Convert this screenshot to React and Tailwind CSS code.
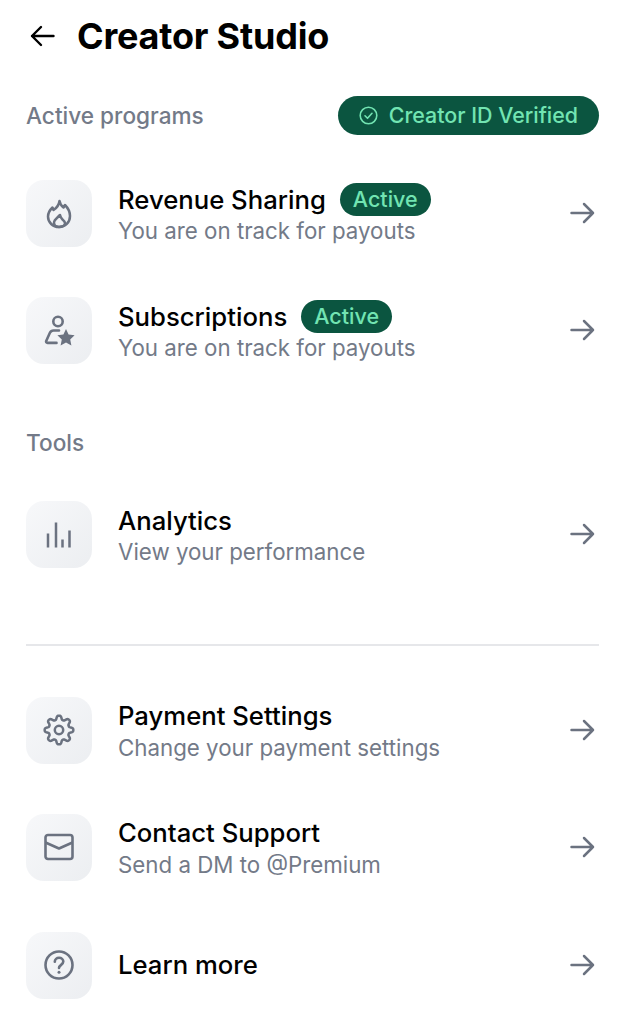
const font = { fontFamily: "Inter, 'Noto Sans', sans-serif" };

// 8-lobed cog outline, traced in polar coordinates
const cogPath = Array.from({ length: 120 }, (_, i) => {
  const a = (i / 120) * Math.PI * 2;
  const r = 12.4 + 2.1 * Math.tanh(1.6 * Math.cos(8 * a));
  const x = 16 + r * Math.sin(a);
  const y = 16 - r * Math.cos(a);
  return `${i === 0 ? 'M' : 'L'}${x.toFixed(2)} ${y.toFixed(2)}`;
}).join(' ') + 'Z';

function BackArrow() {
  return (
    <svg width="25" height="22" viewBox="0 0 25 22" fill="none" stroke="#000" strokeWidth="2.400" strokeLinecap="round" strokeLinejoin="round">
      <path d="M23.500 11H2M11 2l-9 9 9 9" />
    </svg>
  );
}

function RowArrow() {
  return (
    <svg width="25" height="22" viewBox="0 0 25 22" fill="none" stroke="#6b7280" strokeWidth="2.500" strokeLinecap="round" strokeLinejoin="round" className="mb-[1px] mr-[4px] shrink-0">
      <path d="M1.500 11H23M14 2l9 9-9 9" />
    </svg>
  );
}

function Flame() {
  return (
    <svg width="26" height="30" viewBox="0 0 26 30" fill="none" stroke="#6b7280" strokeWidth="2.500" strokeLinejoin="round" strokeLinecap="round">
      <path d="M13.500 2c.5 3 2 5 4 6.500L19 6c3 3 5 7 5 11 0 6.500-4.800 11-11 11S2 23.500 2 17.500c0-3.500 1.800-6.500 4.500-9l1 2.500c3-2 5.500-5 6-9z" />
      <path d="M13 28c-3 0-5-2-5-4.500 0-2.500 3-4.500 6-7.500.5 2 1.500 3.500 2.500 4.500 1.500 1.200 2.500 2.500 2.500 3.800 0 2-2.500 3.700-6 3.700" />
    </svg>
  );
}

function UserStar() {
  return (
    <svg width="32" height="32" viewBox="0 0 32 32" fill="none">
      <circle cx="15" cy="6.500" r="4.700" stroke="#6b7280" strokeWidth="2.600" />
      <path d="M16 15.500h-5.500c-1.800 0-3 1-3.700 2.500L3.200 26c-.4 1 .2 1.900 1.300 1.900h9" stroke="#6b7280" strokeWidth="2.600" strokeLinejoin="round" strokeLinecap="round" />
      <path d="M24.500 14l2.600 5.600 6 .7-4.400 4.200 1.200 6-5.400-3-5.400 3 1.200-6-4.400-4.200 6-.7z" fill="#6b7280" transform="translate(-1.500 0)" />
    </svg>
  );
}

function Bars() {
  return (
    <svg width="26" height="28" viewBox="0 0 26 28" fill="none" stroke="#6b7280" strokeWidth="2.500">
      <path d="M2 12.500V26.500M10 1.500v25M16.500 18.500v8M23.500 9.500v17" />
    </svg>
  );
}

function Cog() {
  return (
    <svg width="32" height="32" viewBox="0 0 32 32" fill="none" stroke="#6b7280" strokeWidth="2.500" strokeLinejoin="round">
      <path d={cogPath} />
      <circle cx="16" cy="16" r="4.200" />
    </svg>
  );
}

function Mail() {
  return (
    <svg width="30" height="28" viewBox="0 0 30 28" fill="none" stroke="#6b7280" strokeWidth="2.600" strokeLinejoin="round">
      <rect x="1.500" y="2" width="27" height="24" rx="2.500" />
      <path d="M1.500 9.500l13.500 6 13.500-6" />
    </svg>
  );
}

function Help() {
  return (
    <svg width="30" height="30" viewBox="0 0 30 30" fill="none" stroke="#6b7280" strokeWidth="2.600" strokeLinecap="round">
      <circle cx="15" cy="15" r="13.500" />
      <path d="M10.800 11.800c0-2.400 1.900-4 4.300-4s4.200 1.600 4.200 3.800c0 3.200-4.300 3.300-4.300 6.400" />
      <circle cx="15" cy="22.300" r="1.500" fill="#6b7280" stroke="none" />
    </svg>
  );
}

function Badge() {
  return (
    <span className="ml-[14px] flex h-[33px] items-center rounded-full bg-[#0b5540] px-[13px] text-[21.500px] font-medium leading-none text-[#72e4b2]">Active</span>
  );
}

function Row({ icon, title, subtitle, badge, className }) {
  return (
    <div className={`flex h-[67px] items-center ${className || ''}`}>
      <div className="flex h-[67px] w-[66px] shrink-0 items-center justify-center rounded-[18px] bg-gradient-to-br from-[#f7f8fa] to-[#eceef1]">
        {icon}
      </div>
      <div className={`ml-[26px] min-w-0 flex-1 ${subtitle ? 'pb-[2px]' : ''}`}>
        <div className="flex h-[37px] items-center">
          <span className="text-[25.700px] font-medium leading-none text-black">{title}</span>
          {badge && <Badge />}
        </div>
        {subtitle && <div className="text-[22.300px] leading-[26px] text-[#737a88]">{subtitle}</div>}
      </div>
      <RowArrow />
    </div>
  );
}

export default function App() {
  return (
    <div className="h-[1023px] w-[625px] overflow-hidden bg-white px-[26px]" style={font}>
      <div className="flex h-[72px] items-center">
        <span className="ml-[4px] flex"><BackArrow /></span>
        <h1 className="ml-[22px] text-[36px] font-bold leading-none tracking-[-0.2px] text-black">Creator Studio</h1>
      </div>

      <div className="mt-[24px] flex h-[39px] items-center justify-between">
        <span className="text-[22.600px] font-medium text-[#737a88]">Active programs</span>
        <span className="flex h-[39px] items-center rounded-full bg-[#0b5540] pl-[21px] pr-[21px] text-[21.400px] font-medium text-[#72e4b2]">
          <svg width="19" height="19" viewBox="0 0 19 19" fill="none" stroke="#72e4b2" strokeWidth="1.600" strokeLinecap="round" strokeLinejoin="round" className="mr-[11px]">
            <circle cx="9.500" cy="9.500" r="8.300" />
            <path d="M6 9.800l2.500 2.500 4.500-5" />
          </svg>
          Creator ID Verified
        </span>
      </div>

      <Row className="mt-[45px]" icon={<Flame />} title="Revenue Sharing" subtitle="You are on track for payouts" badge />
      <Row className="mt-[50px]" icon={<UserStar />} title="Subscriptions" subtitle="You are on track for payouts" badge />

      <div className="mt-[65px] text-[22.600px] font-medium leading-[28px] text-[#737a88]">Tools</div>

      <Row className="mt-[44px]" icon={<Bars />} title="Analytics" subtitle="View your performance" />

      <div className="mt-[76px] h-[1.500px] bg-[#e6e7ea]" />

      <Row className="mt-[51px]" icon={<Cog />} title="Payment Settings" subtitle="Change your payment settings" />
      <Row className="mt-[50px]" icon={<Mail />} title="Contact Support" subtitle="Send a DM to @Premium" />
      <Row className="mt-[51px]" icon={<Help />} title="Learn more" />
    </div>
  );
}
